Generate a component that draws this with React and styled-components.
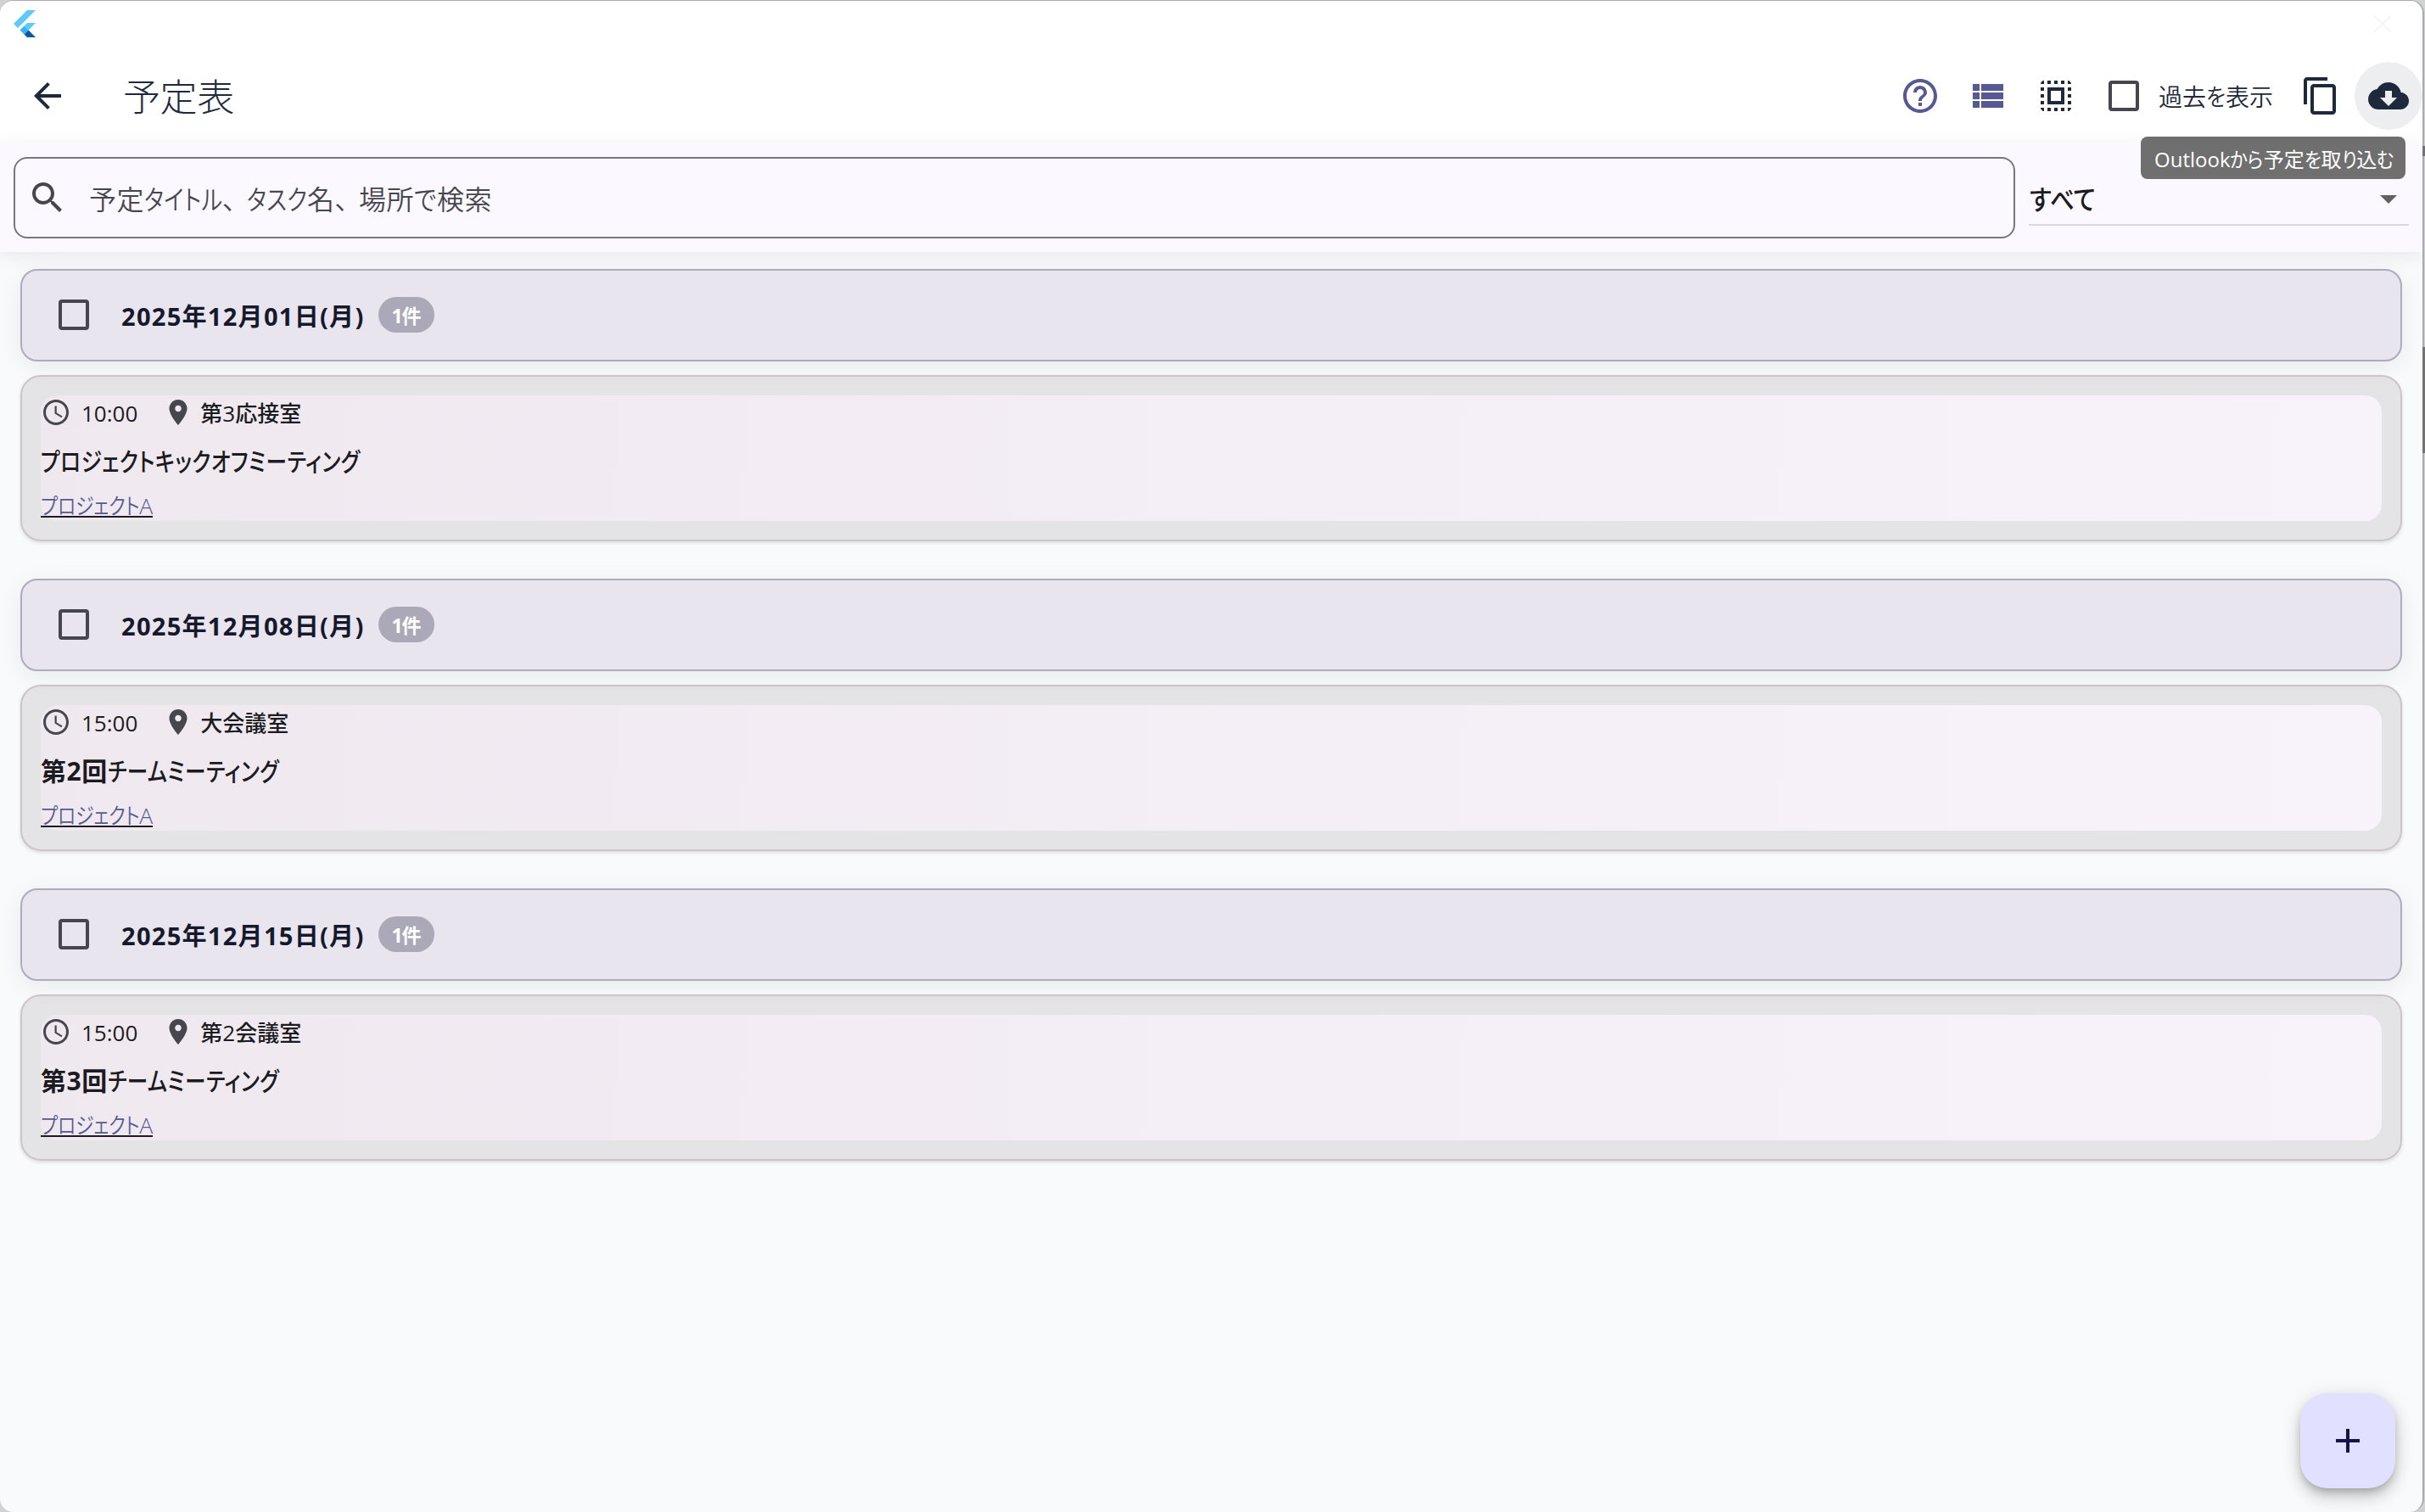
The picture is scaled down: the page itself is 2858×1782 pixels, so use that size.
import { useState } from 'react';
import styled, { createGlobalStyle } from 'styled-components';

const GlobalStyle = createGlobalStyle`
  * {
    box-sizing: border-box;
  }
  body {
    margin: 0;
    background: #d0d2d4;
    font-family: 'Open Sans', 'Noto Sans CJK JP', sans-serif;
    font-feature-settings: 'palt';
    color: #1b1b21;
  }
`

const Window = styled.div`
  display: flex;
  flex-direction: column;
  width: 2857px;
  height: 1782px;
  border: solid #a9abae;
  border-width: 1px 2px 0 0;
  border-radius: 16px;
  background: #f9fafc;
  overflow: hidden;
`

const TitleBar = styled.div`
  display: flex;
  justify-content: space-between;
  height: 56px;
  padding: 11px 37px 0 16px;
  background: white;
`

const AppBar = styled.header`
  display: flex;
  align-items: center;
  height: 112px;
  padding: 0 0 0 32px;
  background: white;
  color: #1e293b;
  h1 {
    flex: 1;
    margin: 1px 0 0 65px;
    font-size: 44px;
    font-weight: 300;
    letter-spacing: -0.4px;
    line-height: 60px;
  }
`

const Actions = styled.div`
  display: flex;
  align-items: center;
`

const IconButton = styled.button`
  display: flex;
  align-items: center;
  justify-content: center;
  width: 80px;
  height: 80px;
  padding: 0;
  border: none;
  border-radius: 50%;
  background: ${props => props.$hovered ? '#eceef0' : 'transparent'};
  color: ${props => props.$primary ? '#575992' : '#1e293b'};
`

const Checkbox = styled.span`
  width: 36px;
  height: 36px;
  border: 4px solid #47464f;
  border-radius: 4px;
`

const PastToggle = styled.label`
  display: flex;
  align-items: center;
  width: 232px;
  padding-left: 22px;
  font-size: 28px;
  font-weight: 350;
  white-space: nowrap;
  > :last-child {
    margin-left: 23px;
  }
`

const FilterBar = styled.div`
  position: relative;
  display: flex;
  gap: 16px;
  height: 128px;
  padding: 16px 16px 16px 16px;
  background: #fbf8ff;
  box-shadow: 0 4px 20px rgba(0, 0, 0, 0.08);
`

const SearchBox = styled.div`
  display: flex;
  align-items: center;
  gap: 25px;
  width: 2359px;
  height: 96px;
  padding-left: 14px;
  border: 2px solid #787680;
  border-radius: 16px;
  color: #47464f;
  font-size: 32px;
  font-weight: 350;
  letter-spacing: 0.5px;
`

const Select = styled.div`
  display: flex;
  align-items: center;
  justify-content: space-between;
  width: 448px;
  height: 81px;
  padding: 16px 0 0 1px;
  border-bottom: 2px solid #dad7de;
  font-size: 32px;
  font-weight: 500;
  svg {
    margin-top: 2px;
    color: #616161;
  }
`

const Tooltip = styled.div`
  position: absolute;
  top: -8px;
  right: 20px;
  height: 50px;
  width: 312px;
  padding: 2px 0 0 16px;
  border-radius: 8px;
  background: #6f6f6f;
  color: white;
  font-size: 24px;
  line-height: 50px;
  white-space: nowrap;
`

const DayList = styled.main`
  display: flex;
  flex-direction: column;
  gap: 44px;
  padding: 20px 24px;
`

const Day = styled.section`
  display: flex;
  flex-direction: column;
  gap: 16px;
`

const DayHeader = styled.div`
  display: flex;
  align-items: center;
  height: 109px;
  padding: 0 0 1px 43px;
  border: 2px solid #aeabbc;
  border-radius: 20px;
  background: #e8e5ef;
  box-shadow: 0 6px 28px rgba(0, 0, 0, 0.07);
  h2 {
    margin: 0 16px 0 38px;
    color: #16182b;
    font-size: 29px;
    font-weight: 700;
    letter-spacing: 1.3px;
  }
`

const Count = styled.span`
  width: 66px;
  height: 42px;
  border-radius: 21px;
  background: #aba8b8;
  color: white;
  font-size: 23px;
  font-weight: 700;
  letter-spacing: -1px;
  line-height: 44px;
  text-align: center;
`

const EventCard = styled.div`
  height: 196px;
  padding: 22px;
  border: 2px solid #cdc4cb;
  border-radius: 24px;
  background: rgba(20, 10, 10, 0.09);
  box-shadow: 0 2px 4px rgba(0, 0, 0, 0.12);
`

const EventBody = styled.div`
  display: flex;
  flex-direction: column;
  align-items: flex-start;
  height: 148px;
  border-radius: 20px;
  background: linear-gradient(93deg, #efe8ef, #f8f3fb);
  white-space: nowrap;
  h3 {
    margin: 16px 0 0;
    font-size: 30px;
    font-weight: 700;
    letter-spacing: 0.6px;
    line-height: 44px;
  }
  a {
    margin-top: 18px;
    border-bottom: 2px solid #1b1b21;
    color: #575992;
    font-size: 26.500px;
    font-weight: 350;
    line-height: 24px;
  }
`

const EventMeta = styled.div`
  display: flex;
  align-items: center;
  height: 40px;
  color: #47464f;
  span {
    margin: 2px 30px 0 12px;
    color: #1b1b21;
    font-size: 26px;
    font-weight: 500;
  }
  span:last-child {
    margin: 0 0 0 8px;
  }
`

// kana are drawn narrower than kanji, the margin gives back the width that the scale leaves
const Kana = styled.span`
  display: inline-block;
  margin-right: calc(${props => (props.$scale - 1) * 0.9 * props.$length} * 1em);
  transform: scaleX(${props => props.$scale});
  transform-origin: left;
  font-weight: ${props => props.$weight || 'inherit'};
`

const Comma = styled.span`
  margin-right: 12px;
`

const AddButton = styled.button`
  position: absolute;
  left: 2711px;
  top: 1642px;
  display: flex;
  align-items: center;
  justify-content: center;
  width: 112px;
  height: 112px;
  border: none;
  border-radius: 32px;
  background: #e1e0ff;
  color: #13144b;
  box-shadow: 0 6px 10px -2px rgba(0, 0, 0, 0.2), 0 12px 20px rgba(0, 0, 0, 0.14), 0 2px 24px rgba(0, 0, 0, 0.1);
`

const ScrollThumb = styled.div`
  position: absolute;
  left: 2855px;
  top: ${props => props.$top}px;
  width: 3px;
  height: ${props => props.$height}px;
  background: #737373;
`

const paths = {
  back: 'M20 11H7.83l5.59-5.59L12 4l-8 8 8 8 1.41-1.41L7.83 13H20v-2z',
  search: 'M15.5 14h-.79l-.28-.27C15.41 12.59 16 11.11 16 9.5 16 5.91 13.09 3 9.5 3S3 5.91 3 9.5 5.91 16 9.5 16c1.61 0 3.09-.59 4.23-1.57l.27.28v.79l5 4.99L20.49 19l-4.99-5zm-6 0C7.01 14 5 11.99 5 9.5S7.01 5 9.5 5 14 7.01 14 9.5 11.99 14 9.5 14z',
  help: 'M11 18h2v-2h-2v2zm1-16C6.48 2 2 6.48 2 12s4.48 10 10 10 10-4.48 10-10S17.52 2 12 2zm0 18c-4.41 0-8-3.59-8-8s3.59-8 8-8 8 3.59 8 8-3.59 8-8 8zm0-14c-2.21 0-4 1.79-4 4h2c0-1.1.9-2 2-2s2 .9 2 2c0 2-3 1.75-3 5h2c0-2.25 3-2.5 3-5 0-2.21-1.79-4-4-4z',
  list: 'M3 14h4v-4H3v4zm0 5h4v-4H3v4zM3 9h4V5H3v4zm5 5h13v-4H8v4zm0 5h13v-4H8v4zM8 5v4h13V5H8z',
  selectAll: 'M3 5h2V3c-1.1 0-2 .9-2 2zm0 8h2v-2H3v2zm4 8h2v-2H7v2zM3 9h2V7H3v2zm10-6h-2v2h2V3zm6 0v2h2c0-1.1-.9-2-2-2zM5 21v-2H3c0 1.1.9 2 2 2zm-2-4h2v-2H3v2zM9 3H7v2h2V3zm2 18h2v-2h-2v2zm8-8h2v-2h-2v2zm0 8c1.1 0 2-.9 2-2h-2v2zm0-12h2V7h-2v2zm0 8h2v-2h-2v2zm-4 4h2v-2h-2v2zm0-16h2V3h-2v2zM7 17h10V7H7v10zm2-8h6v6H9V9z',
  copy: 'M16 1H4c-1.1 0-2 .9-2 2v14h2V3h12V1zm3 4H8c-1.1 0-2 .9-2 2v14c0 1.1.9 2 2 2h11c1.1 0 2-.9 2-2V7c0-1.1-.9-2-2-2zm0 16H8V7h11v14z',
  cloud: 'M19.35 10.04C18.67 6.59 15.64 4 12 4 9.11 4 6.6 5.64 5.35 8.04 2.34 8.36 0 10.91 0 14c0 3.31 2.69 6 6 6h13c2.76 0 5-2.24 5-5 0-2.64-2.05-4.78-4.65-4.96zM17 13l-5 5-5-5h3V9h4v4h3z',
  clock: 'M11.99 2C6.47 2 2 6.48 2 12s4.47 10 9.99 10C17.52 22 22 17.52 22 12S17.52 2 11.99 2zM12 20c-4.42 0-8-3.58-8-8s3.58-8 8-8 8 3.58 8 8-3.58 8-8 8zm.5-13H11v6l5.25 3.15.75-1.23-4.5-2.67z',
  place: 'M12 2C8.13 2 5 5.13 5 9c0 5.25 7 13 7 13s7-7.75 7-13c0-3.87-3.13-7-7-7zm0 9.5c-1.38 0-2.5-1.12-2.5-2.5s1.12-2.5 2.5-2.5 2.5 1.12 2.5 2.5-1.12 2.5-2.5 2.5z',
  dropDown: 'M7 10l5 5 5-5z',
  add: 'M19 13h-6v6h-2v-6H5v-2h6V5h2v6h6v2z'
}

function Icon({ name, size = 48 }) {
  return (
    <svg width={size} height={size} viewBox="0 0 24 24" fill="currentColor">
      <path d={paths[name]} />
    </svg>
  )
}

function FlutterLogo() {
  return (
    <svg width="26" height="32" viewBox="0 0 26 32">
      <path d="M16 0h10L5 21l-5-5z" fill="#5fc9f8" />
      <path d="M16 15h10l-8.500 8.500-5-5z" fill="#5fc9f8" />
      <path d="M7.500 23.500l5-5 5 5-5 5z" fill="#35b5f2" />
      <path d="M12.500 28.500l5-5L26 32H16z" fill="#075b9d" />
    </svg>
  )
}

function Text({ children, kanaWeight }) {
  const parts = children.split(/([ァ-ヶー]+|[ぁ-ん]+|、)/)
  return (
    <span>
      {parts.map((part, index) => {
        if (part === '、') return <Comma key={index}>{part}</Comma>
        if (/^[ァ-ヶー]/.test(part)) {
          return <Kana key={index} $scale={0.82} $length={part.length} $weight={kanaWeight}>{part}</Kana>
        }
        if (/^[ぁ-ん]/.test(part)) {
          return <Kana key={index} $scale={0.89} $length={part.length} $weight={kanaWeight}>{part}</Kana>
        }
        return part
      })}
    </span>
  )
}

const dayList = [
  {
    date: '2025年12月01日(月)',
    time: '10:00',
    place: '第3応接室',
    title: 'プロジェクトキックオフミーティング',
    project: 'プロジェクトA'
  },
  {
    date: '2025年12月08日(月)',
    time: '15:00',
    place: '大会議室',
    title: '第2回チームミーティング',
    project: 'プロジェクトA'
  },
  {
    date: '2025年12月15日(月)',
    time: '15:00',
    place: '第2会議室',
    title: '第3回チームミーティング',
    project: 'プロジェクトA'
  }
]

function App() {
  const [days] = useState(dayList);
  return (
    <Window>
      <GlobalStyle />
      <TitleBar>
        <FlutterLogo />
        <svg width="20" height="32" viewBox="0 0 20 32" stroke="#f6f6f6" strokeWidth="2">
          <path d="M0 6l20 20M20 6L0 26" />
        </svg>
      </TitleBar>
      <AppBar>
        <Icon name='back' />
        <h1>予定表</h1>
        <Actions>
          <IconButton $primary><Icon name='help' /></IconButton>
          <IconButton $primary><Icon name='list' /></IconButton>
          <IconButton><Icon name='selectAll' /></IconButton>
          <PastToggle><Checkbox /><Text>過去を表示</Text></PastToggle>
          <IconButton><Icon name='copy' /></IconButton>
          <IconButton $hovered><Icon name='cloud' /></IconButton>
        </Actions>
      </AppBar>
      <FilterBar>
        <SearchBox>
          <Icon name='search' />
          <Text>予定タイトル、タスク名、場所で検索</Text>
        </SearchBox>
        <Select>
          <Text>すべて</Text>
          <Icon name='dropDown' />
        </Select>
        <Tooltip><Text>Outlookから予定を取り込む</Text></Tooltip>
      </FilterBar>
      <DayList>
        {days.map((day, index) => {
          return (
            <Day key={index}>
              <DayHeader>
                <Checkbox />
                <h2>{day.date}</h2>
                <Count>1件</Count>
              </DayHeader>
              <EventCard>
                <EventBody>
                  <EventMeta>
                    <Icon name='clock' size={36} />
                    <span>{day.time}</span>
                    <Icon name='place' size={36} />
                    <span>{day.place}</span>
                  </EventMeta>
                  <h3><Text kanaWeight={500}>{day.title}</Text></h3>
                  <a><Text>{day.project}</Text></a>
                </EventBody>
              </EventCard>
            </Day>
          )
        })}
      </DayList>
      <AddButton><Icon name='add' /></AddButton>
      <ScrollThumb $top={172} $height={12} />
      <ScrollThumb $top={409} $height={125} />
    </Window>
  );
}

export default App;
